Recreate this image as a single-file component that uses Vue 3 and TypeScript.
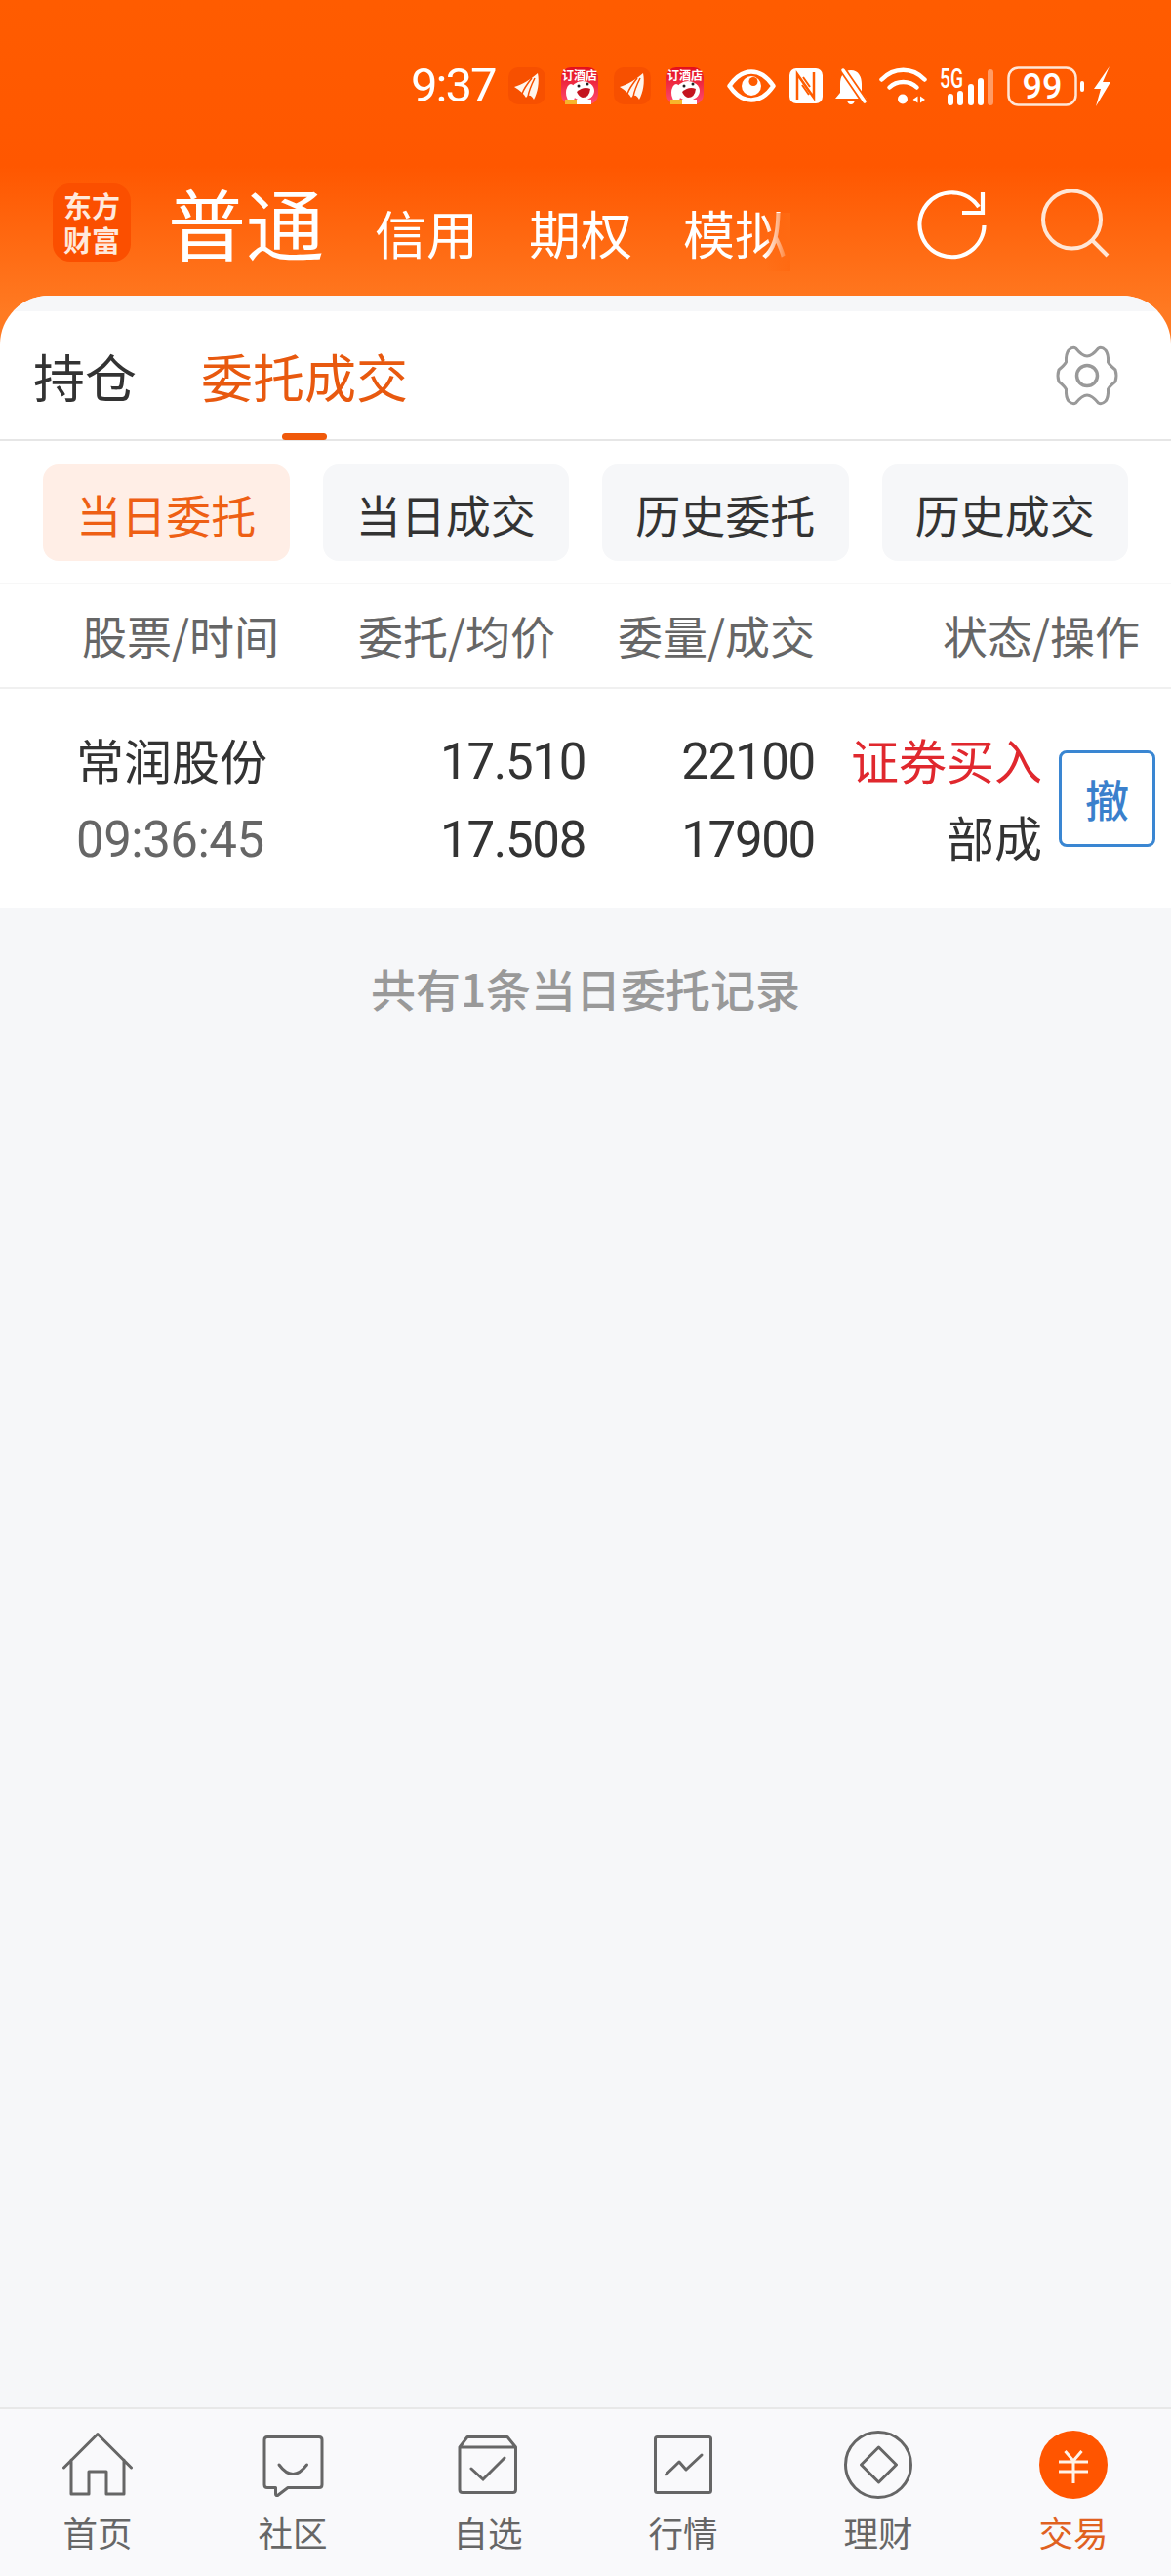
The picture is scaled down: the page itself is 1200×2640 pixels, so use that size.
<template>
  <div class="page">
    <div class="hero">
      <div class="status-bar">
        <span class="clock">9:37</span>
        <div class="status-apps">
          <template v-for="n in 2" :key="n">
            <svg class="app-icon" viewBox="0 0 38 38">
              <rect width="38" height="38" rx="10" fill="#f75000" />
              <path d="M6 20C14 18 23 12 30 6C32 15 30 26 26 33C24 29 21 27 18 31C16 27 12 24 6 20Z" fill="#fff5ec" />
              <path d="M14 27C16 21 20 16 24 11M20 30C21 24 24 17 27 11" fill="none" stroke="#f75000" stroke-width="1.500" />
            </svg>
            <svg class="app-icon" viewBox="0 0 38 38">
              <defs>
                <linearGradient :id="'dog' + n" x1="0" y1="0" x2="0" y2="1">
                  <stop offset="0" stop-color="#e30f1c" />
                  <stop offset="1" stop-color="#ff4d73" />
                </linearGradient>
              </defs>
              <rect width="38" height="38" rx="10" :fill="'url(#dog' + n + ')'" />
              <text class="app-label" x="19" y="13" text-anchor="middle">订酒店</text>
              <ellipse cx="22" cy="24" rx="12" ry="10" fill="#fff" />
              <ellipse cx="10" cy="26" rx="5" ry="9" fill="#fff" />
              <path d="M16 25Q23 19 30 22Q29 31 22 31Q18 30 16 25Z" fill="#c4141f" />
              <circle cx="18" cy="19" r="1.500" fill="#222" />
              <circle cx="27" cy="17" r="1.500" fill="#222" />
              <rect x="4" y="33" width="12" height="5" fill="#f7b52b" />
              <rect x="16" y="33" width="15" height="5" fill="#fff" />
            </svg>
          </template>
        </div>
        <svg class="eye" viewBox="0 0 50 34">
          <path d="M2.500 17C10 6 18 2.500 25 2.500C32 2.500 40 6 47.500 17C40 28 32 31.500 25 31.500C18 31.500 10 28 2.500 17Z" fill="none" stroke="#fff" stroke-width="4.500" stroke-linejoin="round" />
          <circle cx="25" cy="17" r="10" fill="#fff" />
          <circle cx="27" cy="12.500" r="4.500" fill="#ff5c00" />
        </svg>
        <svg class="nfc" viewBox="0 0 34 36">
          <rect width="34" height="36" rx="7" fill="#fff" />
          <path d="M8 32V6L25 30V4" fill="none" stroke="#ff5c00" stroke-width="2.500" />
          <path d="M13 17L20 27M14 9L21 19" fill="none" stroke="#ff5c00" stroke-width="2" />
        </svg>
        <svg class="bell" viewBox="0 0 34 39">
          <path d="M17 3C25 3 28 10 28 17V26L33 32H1L6 26V17C6 10 9 3 17 3Z" fill="#fff" />
          <path d="M13 34H21Q20 38 17 38Q14 38 13 34Z" fill="#fff" />
          <path d="M7 0L33 38" stroke="#ff5c00" stroke-width="7" />
          <path d="M9 3L31 35" stroke="#fff" stroke-width="3.500" stroke-linecap="round" />
        </svg>
        <svg class="wifi" viewBox="0 0 49 38">
          <path d="M2.500 12.500C15 -0.500 34 -0.500 46.500 12.500" fill="none" stroke="#fff" stroke-width="4.500" stroke-linecap="round" />
          <path d="M10.500 20.500C18 13 31 13 38.500 20.500" fill="none" stroke="#fff" stroke-width="4.500" stroke-linecap="round" />
          <circle cx="24" cy="32.500" r="5" fill="#fff" />
          <path d="M39.500 29.500V36.500L34.500 33Z M42 29.500V36.500L47 33Z" fill="#fff" />
        </svg>
        <svg class="signal" viewBox="0 0 55 39">
          <text class="signal-label" x="0" y="21" textLength="24" lengthAdjust="spacingAndGlyphs">5G</text>
          <rect x="8" y="27" width="6" height="12" rx="3" fill="#fff" />
          <rect x="18" y="24" width="6" height="15" rx="3" fill="#fff" />
          <rect x="29" y="17" width="6" height="22" rx="3" fill="#fff" />
          <rect x="39" y="11" width="6" height="28" rx="3" fill="#fff" />
          <rect x="49" y="2" width="6" height="37" rx="3" fill="#fff" opacity="0.4" />
        </svg>
        <svg class="battery" viewBox="0 0 80 41">
          <rect x="1.500" y="1.500" width="69" height="38" rx="10" fill="none" stroke="#ffe7d8" stroke-width="2.500" />
          <text class="battery-label" x="36" y="33" text-anchor="middle">99</text>
          <rect x="75" y="15" width="4" height="11" rx="2" fill="#fff" />
        </svg>
        <svg class="bolt" viewBox="0 0 18 41">
          <path d="M17 0L1 23H8L3 41L18 16H10L17 0Z" fill="#fff" />
        </svg>
      </div>

      <div class="nav">
        <div class="logo">东方财富</div>
        <div class="accounts">
          <span class="account-main">普通</span>
          <span class="account">信用</span>
          <span class="account">期权</span>
          <span class="account account-last">模拟</span>
        </div>
        <div class="nav-actions">
          <svg class="refresh" viewBox="0 0 74 74">
            <path d="M69.500 38A33 33 0 1 1 64 19" fill="none" stroke="#fff" stroke-width="4.200" />
            <path d="M68 4V25H47" fill="none" stroke="#fff" stroke-width="4.200" />
          </svg>
          <svg class="search" viewBox="0 0 72 72">
            <circle cx="31.500" cy="31" r="29.500" fill="none" stroke="#ffe6d6" stroke-width="4" />
            <path d="M52 52L68 68" stroke="#ffe6d6" stroke-width="4" />
          </svg>
        </div>
      </div>

      <div class="card-top">
        <div class="card-strip"></div>
        <div class="tabs">
          <span class="tab">持仓</span>
          <span class="tab tab-active">委托成交</span>
          <svg class="gear" viewBox="0 0 64 60">
            <path d="M32 10Q37 10 43.500 2Q47 0 51 4Q54 8 53.500 16Q55 19 61 24Q63 30 61 36Q55 41 53.500 44Q54 52 51 56Q47 60 43.500 58Q37 50 32 50Q27 50 20.500 58Q17 60 13 56Q10 52 10.500 44Q9 41 3 36Q1 30 3 24Q9 19 10.500 16Q10 8 13 4Q17 0 20.500 2Q27 10 32 10Z" fill="none" stroke="#999" stroke-width="3" stroke-linejoin="round" />
            <circle cx="32" cy="30" r="10.500" fill="none" stroke="#999" stroke-width="3.500" />
          </svg>
        </div>
      </div>
    </div>

    <div class="sub-tabs">
      <span
        v-for="(item, i) in subTabs"
        :key="item"
        class="sub-tab"
        :class="{ 'sub-tab-active': i === 0 }"
      >{{ item }}</span>
    </div>

    <div class="table-head">
      <span>股票/时间</span>
      <span>委托/均价</span>
      <span>委量/成交</span>
      <span>状态/操作</span>
    </div>

    <div class="row">
      <div class="row-cells">
        <span class="name">常润股份</span>
        <span class="num">17.510</span>
        <span class="num">22100</span>
        <span class="side">证券买入</span>
        <span class="time">09:36:45</span>
        <span class="num">17.508</span>
        <span class="num">17900</span>
        <span class="state">部成</span>
      </div>
      <button class="cancel">撤</button>
    </div>

    <div class="summary">共有1条当日委托记录</div>

    <div class="bottom-nav">
      <div class="nav-item">
        <svg class="nav-icon" viewBox="0 0 80 72">
          <path d="M5.500 39L40 4.500L74.500 39M13 31V66H31V43H49V66H67V31" fill="none" stroke="#666" stroke-width="3" stroke-linejoin="round" stroke-linecap="round" />
        </svg>
        <span>首页</span>
      </div>
      <div class="nav-item">
        <svg class="nav-icon" viewBox="0 0 80 72">
          <path d="M14 7.500H67Q70 7.500 70 10.500V56.500Q70 59.500 67 59.500H35L24.500 67.500Q22.500 68 22.500 66V59.500H14Q11 59.500 11 56.500V10.500Q11 7.500 14 7.500Z" fill="none" stroke="#666" stroke-width="3" stroke-linejoin="round" />
          <path d="M26 36Q40 55 54.500 36" fill="none" stroke="#666" stroke-width="3" stroke-linecap="round" />
        </svg>
        <span>社区</span>
      </div>
      <div class="nav-item">
        <svg class="nav-icon" viewBox="0 0 80 72">
          <path d="M19 7.500H60L68.500 18V61.500Q68.500 64.500 65.500 64.500H14Q11 64.500 11 61.500V18ZM11 18H68.500" fill="none" stroke="#666" stroke-width="3" stroke-linejoin="round" />
          <path d="M23 40L35 51L57 29" fill="none" stroke="#666" stroke-width="3" stroke-linecap="round" />
        </svg>
        <span>自选</span>
      </div>
      <div class="nav-item">
        <svg class="nav-icon" viewBox="0 0 80 72">
          <rect x="11.500" y="7.500" width="57" height="57" rx="2" fill="none" stroke="#666" stroke-width="3" />
          <path d="M22.500 46L36 33L43 41L59 26" fill="none" stroke="#666" stroke-width="3" stroke-linecap="round" stroke-linejoin="round" />
        </svg>
        <span>行情</span>
      </div>
      <div class="nav-item">
        <svg class="nav-icon" viewBox="0 0 80 72">
          <circle cx="40" cy="36" r="33.500" fill="none" stroke="#666" stroke-width="3" />
          <path d="M40.500 18L58.500 36L40.500 54L22.500 36Z" fill="none" stroke="#666" stroke-width="3" stroke-linejoin="round" />
        </svg>
        <span>理财</span>
      </div>
      <div class="nav-item nav-item-active">
        <svg class="nav-icon" viewBox="0 0 80 72">
          <circle cx="40" cy="36" r="35" fill="#ff5500" />
          <path d="M31.500 22L40 32L48.500 22M25 33H55M25 43H55M40 32V55" fill="none" stroke="#fff2e8" stroke-width="3" />
        </svg>
        <span>交易</span>
      </div>
    </div>
  </div>
</template>

<script setup lang="ts">
const subTabs: string[] = ['当日委托', '当日成交', '历史委托', '历史成交']
</script>

<style>
html,
body {
  margin: 0;
  padding: 0;
}
</style>

<style scoped>
.page {
  width: 1200px;
  height: 2640px;
  display: flex;
  flex-direction: column;
  background: #f6f7f9;
  font-family: "Noto Sans CJK SC", "Noto Sans", sans-serif;
  color: #333;
  overflow: hidden;
}

.hero {
  background: linear-gradient(to bottom, #ff5c00 0, #ff5700 170px, #ff7a22 320px, #ff7a22 100%);
}

.status-bar {
  height: 176px;
  box-sizing: border-box;
  padding: 0 62px 0 421px;
  display: flex;
  align-items: center;
  color: #fff;
}

.clock {
  width: 86px;
  font-family: Roboto, sans-serif;
  font-weight: 400;
  font-size: 49px;
  letter-spacing: -2px;
  line-height: 50px;
  white-space: nowrap;
}

.status-apps {
  display: flex;
  gap: 16px;
  margin-left: 14px;
}

.app-icon {
  width: 38px;
  height: 38px;
}

.app-label {
  font-size: 12px;
  font-weight: 700;
  fill: #fff;
}

.eye {
  width: 50px;
  height: 34px;
  margin-left: 24px;
}

.nfc {
  width: 34px;
  height: 36px;
  margin-left: 14px;
}

.bell {
  width: 34px;
  height: 39px;
  margin-left: 12px;
}

.wifi {
  width: 49px;
  height: 38px;
  margin-left: 12px;
}

.signal {
  width: 55px;
  height: 39px;
  margin-left: 13px;
  overflow: visible;
}

.signal-label {
  font-family: Roboto, sans-serif;
  font-size: 27px;
  font-weight: 500;
  fill: #fff;
}

.battery {
  width: 80px;
  height: 41px;
  margin-left: 14px;
}

.battery-label {
  font-family: Roboto, sans-serif;
  font-size: 36px;
  font-weight: 500;
  fill: #fff;
}

.bolt {
  width: 18px;
  height: 41px;
  margin-left: 8px;
}

.nav {
  height: 127px;
  box-sizing: border-box;
  padding: 0 0 0 54px;
  display: flex;
  align-items: flex-start;
  color: #fff;
}

.logo {
  width: 80px;
  height: 80px;
  margin-top: 12px;
  padding: 0 11px;
  box-sizing: border-box;
  border-radius: 18px;
  background: #fb4f00;
  color: #ffe9dc;
  font-size: 29px;
  font-weight: 700;
  line-height: 35px;
  text-align: center;
  display: flex;
  align-items: center;
  justify-content: center;
}

.accounts {
  display: flex;
  align-items: baseline;
  gap: 52px;
  margin-left: 38px;
  height: 100px;
}

.account-main {
  font-size: 80px;
  line-height: 100px;
  width: 160px;
}

.account {
  font-size: 53px;
  line-height: 100px;
  position: relative;
}

.account-last::after {
  content: "";
  position: absolute;
  top: 30px;
  bottom: 10px;
  right: -4px;
  width: 26px;
  background: linear-gradient(to right, rgba(255, 106, 18, 0), #ff6a12);
}

.nav-actions {
  margin-left: auto;
  display: flex;
  align-items: center;
  gap: 54px;
  padding: 17px 61px 0 0;
}

.refresh {
  width: 74px;
  height: 74px;
}

.search {
  width: 72px;
  height: 72px;
}

.card-top {
  border-radius: 50px 50px 0 0;
  overflow: hidden;
  background: #fff;
}

.card-strip {
  height: 16px;
  background: #f6f7f9;
}

.tabs {
  height: 133px;
  box-sizing: border-box;
  padding: 0 54px 0 34px;
  display: flex;
  align-items: center;
  gap: 66px;
  border-bottom: 2px solid #e6e6e6;
}

.tab {
  font-size: 53px;
  line-height: 70px;
  position: relative;
  height: 131px;
  display: flex;
  align-items: center;
  color: #333;
}

.tab-active {
  color: #e8590f;
}

.tab-active::after {
  content: "";
  position: absolute;
  left: 50%;
  bottom: -1px;
  width: 46px;
  height: 7px;
  margin-left: -23px;
  border-radius: 4px;
  background: #f0590a;
}

.gear {
  width: 64px;
  height: 60px;
  margin-left: auto;
  overflow: visible;
}

.sub-tabs {
  background: #fff;
  padding: 24px 0 22px 44px;
  display: flex;
  gap: 34px;
  border-bottom: 1px solid #f7f7f7;
}

.sub-tab {
  width: 252.500px;
  height: 99px;
  border-radius: 16px;
  background: #f6f7f9;
  color: #333;
  font-size: 46px;
  display: flex;
  align-items: center;
  justify-content: center;
}

.sub-tab-active {
  background: #ffeee6;
  color: #ee5f14;
}

.table-head {
  height: 108px;
  box-sizing: border-box;
  background: #fff;
  padding-left: 84px;
  padding-bottom: 2px;
  display: grid;
  grid-template-columns: 283px 266px 333px 1fr;
  align-items: center;
  color: #666;
  font-size: 46px;
  border-bottom: 2px solid #f0f0f0;
}

.row {
  height: 225px;
  box-sizing: border-box;
  background: #fff;
  padding-left: 78px;
  display: flex;
  align-items: center;
}

.row-cells {
  display: grid;
  grid-template-columns: 200px 322px 235px 233px;
  grid-auto-rows: 80px;
  align-items: center;
  font-size: 49px;
}

.name {
  color: #333;
  padding-bottom: 2px;
}

.time {
  color: #666;
  padding-top: 4px;
  font-family: Roboto, sans-serif;
  font-size: 51px;
  letter-spacing: -0.500px;
}

.num {
  text-align: right;
  padding-top: 4px;
  font-family: Roboto, sans-serif;
  font-size: 51px;
  letter-spacing: -1.300px;
  color: #333;
}

.state {
  text-align: right;
  color: #333;
  padding-bottom: 4px;
}

.side {
  text-align: right;
  color: #e0282e;
  padding-bottom: 2px;
}

.cancel {
  width: 99px;
  height: 99px;
  margin-left: 17px;
  padding: 0;
  box-sizing: border-box;
  border: 3px solid #3a86d2;
  border-radius: 8px;
  background: #fff;
  color: #3a80cc;
  font-family: inherit;
  font-size: 45px;
  font-weight: 500;
}

.summary {
  margin-top: 51px;
  line-height: 60px;
  text-align: center;
  font-size: 46px;
  font-weight: 500;
  color: #999;
}

.bottom-nav {
  margin-top: auto;
  height: 173px;
  box-sizing: border-box;
  padding-top: 21px;
  background: #f9f9fb;
  border-top: 2px solid #e8e8e8;
  display: grid;
  grid-template-columns: repeat(6, 1fr);
}

.nav-item {
  display: flex;
  flex-direction: column;
  align-items: center;
  gap: 13px;
  font-size: 35.500px;
  line-height: 40px;
  color: #666;
}

.nav-item-active {
  color: #e0611f;
}

.nav-icon {
  width: 80px;
  height: 72px;
}
</style>
